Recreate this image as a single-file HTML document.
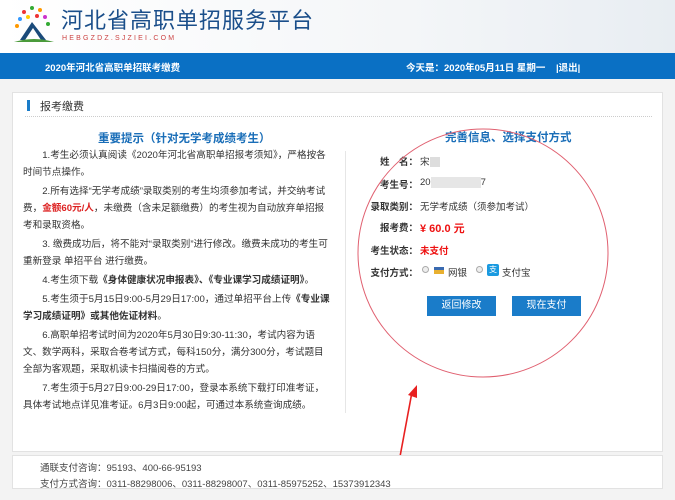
<!DOCTYPE html>
<html><head><meta charset="utf-8"><style>
*{margin:0;padding:0;box-sizing:border-box}
body{width:675px;height:500px;overflow:hidden;background:#f3f3f3;font-family:"Liberation Sans","Noto Sans CJK SC",sans-serif;font-size:10px;color:#333;position:relative}
.hdr{position:absolute;left:0;top:0;width:675px;height:53px;background:linear-gradient(90deg,#fff 0%,#f4f6f8 60%,#e8edf2 100%)}
.bar{position:absolute;left:0;top:53px;width:675px;height:26px;background:#0a70c4;color:#fff;font-size:9.5px;font-weight:bold}
.panel{position:absolute;left:12px;top:92px;width:651px;height:360px;background:#fff;border:1px solid #e2e2e2}
.foot{position:absolute;left:12px;top:455px;width:651px;height:34px;background:#fff;border:1px solid #e2e2e2;font-size:9.5px;color:#444}
.lt p{text-indent:2em;line-height:17px;margin-bottom:2px}
.r{position:absolute;font-size:9.5px}
.lab{position:absolute;width:68px;text-align:right;font-weight:bold;color:#333}
.btn{position:absolute;top:296px;width:69px;height:20px;background:#1a7cc9;color:#fff;font-size:10px;text-align:center;line-height:20px}
</style></head><body>
<div class="hdr">
<svg style="position:absolute;left:12px;top:4px" width="44" height="42" viewBox="0 0 44 42">
<g fill="#e33"><circle cx="12" cy="8" r="2"/><circle cx="28" cy="6" r="2" fill="#f90"/><circle cx="20" cy="4" r="2" fill="#3a3"/><circle cx="8" cy="15" r="2" fill="#39f"/><circle cx="33" cy="13" r="2" fill="#c3c"/><circle cx="16" cy="13" r="2" fill="#fc0"/><circle cx="25" cy="12" r="2" fill="#e33"/><circle cx="36" cy="20" r="2" fill="#3a3"/><circle cx="5" cy="22" r="2" fill="#f90"/></g>
<path d="M20 18 L8 36 H13 L21 24 L29 36 H34 Z" fill="#1a4a7a"/>
<path d="M2 38 Q22 32 42 38 Z" fill="#4a9a3a"/>
</svg>
<div style="position:absolute;left:61px;top:3px;font-size:22px;color:#1a4e8a;letter-spacing:1px;font-family:'Noto Sans CJK SC',sans-serif">河北省高职单招服务平台</div>
<div style="position:absolute;left:62px;top:35px;font-size:7px;color:#c44;letter-spacing:2.2px">HEBGZDZ.SJZIEI.COM</div>
</div>
<div class="bar"><span style="position:absolute;left:45px;top:7px">2020年河北省高职单招联考缴费</span><span style="position:absolute;left:406px;top:7px">今天是：2020年05月11日 星期一 &nbsp; &nbsp;|退出|</span></div>
<div class="panel">
<div style="position:absolute;left:14px;top:7px;width:3px;height:11px;background:#1a7cc9"></div>
<div style="position:absolute;left:27px;top:5px;font-size:11px;color:#333">报考缴费</div>
<div style="position:absolute;left:12px;top:23px;width:627px;border-top:1px dotted #ccc"></div>
<div style="position:absolute;left:85px;top:37px;font-size:11.5px;color:#1a6eb8;font-weight:bold">重要提示（针对无学考成绩考生）</div>
<div class="lt" style="position:absolute;left:10px;top:54px;width:310px;font-size:9.6px">
<p>1.考生必须认真阅读《2020年河北省高职单招报考须知》，严格按各时间节点操作。</p>
<p>2.所有选择“无学考成绩”录取类别的考生均须参加考试，并交纳考试费，<b style="color:#d22">金额60元/人</b>，未缴费（含未足额缴费）的考生视为自动放弃单招报考和录取资格。</p>
<p>3. 缴费成功后，将不能对“录取类别”进行修改。缴费未成功的考生可重新登录 单招平台 进行缴费。</p>
<p>4.考生须下载<b>《身体健康状况申报表》、《专业课学习成绩证明》</b>。</p>
<p>5.考生须于5月15日9:00-5月29日17:00，通过单招平台上传<b>《专业课学习成绩证明》或其他佐证材料</b>。</p>
<p>6.高职单招考试时间为2020年5月30日9:30-11:30，考试内容为语文、数学两科，采取合卷考试方式，每科150分，满分300分，考试题目全部为客观题，采取机读卡扫描阅卷的方式。</p>
<p>7.考生须于5月27日9:00-29日17:00，登录本系统下载打印准考证，具体考试地点详见准考证。6月3日9:00起，可通过本系统查询成绩。</p>
</div>
<div style="position:absolute;left:332px;top:58px;height:262px;border-left:1px solid #e6e6e6"></div>
</div>
<div style="position:absolute;left:445px;top:129px;font-size:11.5px;color:#1a6eb8;font-weight:bold">完善信息、选择支付方式</div>
<div class="r" style="left:350px;top:154px"><span class="lab" style="left:0">姓　名：</span><span style="position:absolute;left:70px;white-space:nowrap">宋<span style="display:inline-block;width:10px;height:10px;background:#ddd;vertical-align:middle"></span></span></div>
<div class="r" style="left:350px;top:177px"><span class="lab" style="left:0">考生号：</span><span style="position:absolute;left:70px;white-space:nowrap">20<span style="display:inline-block;width:50px;height:11px;background:#e6e6e6;vertical-align:middle"></span>7</span></div>
<div class="r" style="left:350px;top:199px"><span class="lab" style="left:0">录取类别：</span><span style="position:absolute;left:70px;white-space:nowrap">无学考成绩（须参加考试）</span></div>
<div class="r" style="left:350px;top:220px"><span class="lab" style="left:0">报考费：</span><span style="position:absolute;left:70px;white-space:nowrap;color:#e11;font-weight:bold;font-size:11px">¥ 60.0 元</span></div>
<div class="r" style="left:350px;top:243px"><span class="lab" style="left:0">考生状态：</span><span style="position:absolute;left:70px;white-space:nowrap;color:#e11;font-weight:bold">未支付</span></div>
<div class="r" style="left:350px;top:265px"><span class="lab" style="left:0">支付方式：</span>
<span style="position:absolute;left:72px;top:1px;width:7px;height:7px;border-radius:50%;border:1px solid #aaa;background:#eee"></span>
<span style="position:absolute;left:84px;top:2px;width:10px;height:7px;background:#e8b030;border-top:3px solid #3a6ab0"></span>
<span style="position:absolute;left:98px;white-space:nowrap">网银</span>
<span style="position:absolute;left:126px;top:1px;width:7px;height:7px;border-radius:50%;border:1px solid #aaa;background:#eee"></span>
<span style="position:absolute;left:137px;top:-1px;width:12px;height:12px;background:#1a9ae0;border-radius:2px;color:#fff;font-size:8px;line-height:12px;text-align:center">支</span>
<span style="position:absolute;left:152px;white-space:nowrap">支付宝</span></div>
<div class="btn" style="left:427px">返回修改</div>
<div class="btn" style="left:512px">现在支付</div>
<svg style="position:absolute;left:0;top:0" width="675" height="500">
<ellipse cx="483" cy="253" rx="125" ry="124" fill="none" stroke="#e06070" stroke-width="1"/>
<path d="M399 462 L412 392" stroke="#e82020" stroke-width="1.6"/>
<path d="M408 395 L417 385 L417 398 Z" fill="#e82020"/>
</svg>
<div class="foot"><div style="position:absolute;left:27px;top:4px">通联支付咨询：95193、400-66-95193</div><div style="position:absolute;left:27px;top:20px">支付方式咨询：0311-88298006、0311-88298007、0311-85975252、15373912343</div></div>
</body></html>
